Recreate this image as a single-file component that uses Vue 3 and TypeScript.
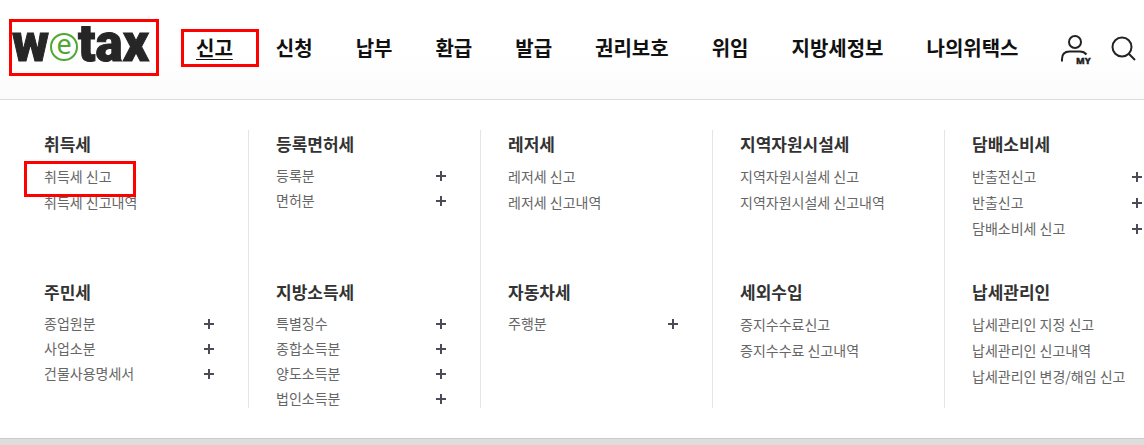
<script setup lang="ts">
interface MenuItem {
  label: string
  marked?: boolean
}

interface MenuGroup {
  title: string
  items: MenuItem[]
  expandable?: boolean
  roomy?: boolean
}

const navItems: string[] = ['신고', '신청', '납부', '환급', '발급', '권리보호', '위임', '지방세정보', '나의위택스']

const columns: MenuGroup[][] = [
  [
    { title: '취득세', items: [{ label: '취득세 신고', marked: true }, { label: '취득세 신고내역' }], roomy: true },
    { title: '주민세', items: [{ label: '종업원분' }, { label: '사업소분' }, { label: '건물사용명세서' }], expandable: true },
  ],
  [
    { title: '등록면허세', items: [{ label: '등록분' }, { label: '면허분' }], expandable: true },
    {
      title: '지방소득세',
      items: [{ label: '특별징수' }, { label: '종합소득분' }, { label: '양도소득분' }, { label: '법인소득분' }],
      expandable: true,
    },
  ],
  [
    { title: '레저세', items: [{ label: '레저세 신고' }, { label: '레저세 신고내역' }], roomy: true },
    { title: '자동차세', items: [{ label: '주행분' }], expandable: true },
  ],
  [
    { title: '지역자원시설세', items: [{ label: '지역자원시설세 신고' }, { label: '지역자원시설세 신고내역' }], roomy: true },
    { title: '세외수입', items: [{ label: '증지수수료신고' }, { label: '증지수수료 신고내역' }], roomy: true },
  ],
  [
    {
      title: '담배소비세',
      items: [{ label: '반출전신고' }, { label: '반출신고' }, { label: '담배소비세 신고' }],
      expandable: true,
      roomy: true,
    },
    {
      title: '납세관리인',
      items: [{ label: '납세관리인 지정 신고' }, { label: '납세관리인 신고내역' }, { label: '납세관리인 변경/해임 신고' }],
      roomy: true,
    },
  ],
]
</script>

<template>
  <div class="page">
    <header class="header">
      <a class="logo" href="#" aria-label="wetax">
        <svg width="144" height="50" viewBox="0 0 144 50">
          <text class="logo-dark" x="0" y="39">w</text>
          <circle cx="52" cy="25" r="13" fill="none" stroke="#4fa832" stroke-width="2" />
          <text class="logo-green" x="52" y="32" text-anchor="middle">e</text>
          <text class="logo-dark" x="66" y="39">tax</text>
        </svg>
      </a>
      <nav class="nav">
        <a v-for="(item, i) in navItems" :key="item" href="#" class="nav-link" :class="{ active: i === 0 }">{{ item }}</a>
      </nav>
      <div class="tools">
        <button type="button" class="tool" aria-label="MY">
          <svg width="30" height="32" viewBox="0 0 30 32" fill="none" stroke="#222" stroke-width="2">
            <circle cx="15" cy="8" r="6" />
            <path d="M2 27.500V25Q2 17.500 9.500 17.500H20Q24 17.500 26.500 20.500" />
            <text class="my" x="16" y="30">MY</text>
          </svg>
        </button>
        <button type="button" class="tool" aria-label="검색">
          <svg width="26" height="32" viewBox="0 0 26 32" fill="none" stroke="#222" stroke-width="2">
            <circle cx="12" cy="13" r="9.500" />
            <path d="M18.500 19.500L25 26" />
          </svg>
        </button>
      </div>
    </header>

    <main class="menu">
      <div v-for="(column, c) in columns" :key="c" class="column">
        <section v-for="group in column" :key="group.title" class="group" :class="{ roomy: group.roomy }">
          <h2>{{ group.title }}</h2>
          <ul>
            <li v-for="item in group.items" :key="item.label">
              <a href="#" :class="{ marked: item.marked }">{{ item.label }}</a>
              <button v-if="group.expandable" type="button" class="expand" :aria-label="`${item.label} 펼치기`">
                <svg width="10" height="10" viewBox="0 0 10 10" stroke="#4c4c58" stroke-width="2">
                  <path d="M5 0V10M0 5H10" />
                </svg>
              </button>
            </li>
          </ul>
        </section>
      </div>
    </main>
    <div class="footer-edge"></div>
  </div>
</template>

<style>
body {
  margin: 0;
  background: #fff;
}
</style>

<style scoped>
.page {
  display: flex;
  flex-direction: column;
  min-height: 100vh;
  overflow: hidden;
  font-family: "Noto Sans CJK KR", "Noto Sans", sans-serif;
}

.page * {
  box-sizing: border-box;
}

a {
  color: inherit;
  text-decoration: none;
}

button {
  display: flex;
  padding: 0;
  border: 0;
  background: none;
  cursor: pointer;
}

.header {
  display: flex;
  align-items: flex-start;
  height: 100px;
  padding: 19px 8px 0 9px;
  border-bottom: 1px solid #ddd;
  background: linear-gradient(#fff 50%, #fbfbfb);
}

.logo {
  display: flex;
  flex: none;
  width: 150px;
  height: 57px;
  border: 3px solid #f00;
}

.logo svg {
  overflow: visible;
}

.logo-dark {
  font: 900 51px Roboto, sans-serif;
  fill: #262626;
  stroke: #262626;
  stroke-width: 1px;
}

.logo-green {
  font: 400 27px "Noto Sans", sans-serif;
  fill: #4fa832;
}

.nav {
  display: flex;
  gap: 43px;
  margin-left: 37px;
  padding-top: 14px;
  color: #111;
  font-size: 20px;
  font-weight: 700;
  line-height: 30px;
  white-space: nowrap;
}

.nav-link.active {
  position: relative;
  text-decoration: underline;
  text-decoration-thickness: 1px;
  text-underline-offset: 3px;
}

.nav-link.active::after {
  position: absolute;
  inset: -4px -26px -4px -15px;
  border: 3px solid #f00;
  content: "";
}

.tools {
  display: flex;
  gap: 20px;
  margin-left: auto;
  padding-top: 15px;
}

.tool svg {
  overflow: visible;
}

.my {
  font: 800 9px "Open Sans", sans-serif;
  fill: #222;
  stroke: #222;
  stroke-width: 0.3px;
}

.menu {
  display: grid;
  flex: 1;
  grid-template-columns: repeat(4, 232fr) 199fr;
  align-items: start;
  padding: 30px 0 30px 17px;
}

.column {
  display: grid;
  grid-template-rows: 148px 130px;
  padding: 0 34px 0 27px;
  border-right: 1px solid #e5e5e5;
}

.column:last-child {
  padding-right: 2px;
  border-right: 0;
}

h2 {
  margin: 0 0 4px;
  color: #333;
  font-size: 17px;
  font-weight: 700;
  line-height: 28px;
}

.roomy h2 {
  margin-bottom: 5px;
}

ul {
  margin: 0;
  padding: 0;
  list-style: none;
}

li {
  display: flex;
  align-items: center;
  justify-content: space-between;
  height: 25px;
  color: #666;
  font-size: 14px;
  line-height: 24px;
  white-space: nowrap;
}

.roomy li {
  height: 26px;
}

.expand {
  padding-top: 2px;
}

.marked {
  position: relative;
}

.marked::after {
  position: absolute;
  inset: -3px -24px -9px -20px;
  border: 3px solid #f00;
  content: "";
}

.footer-edge {
  height: 7px;
  border-top: 1px solid #ccc;
  background: #ddd;
}
</style>
